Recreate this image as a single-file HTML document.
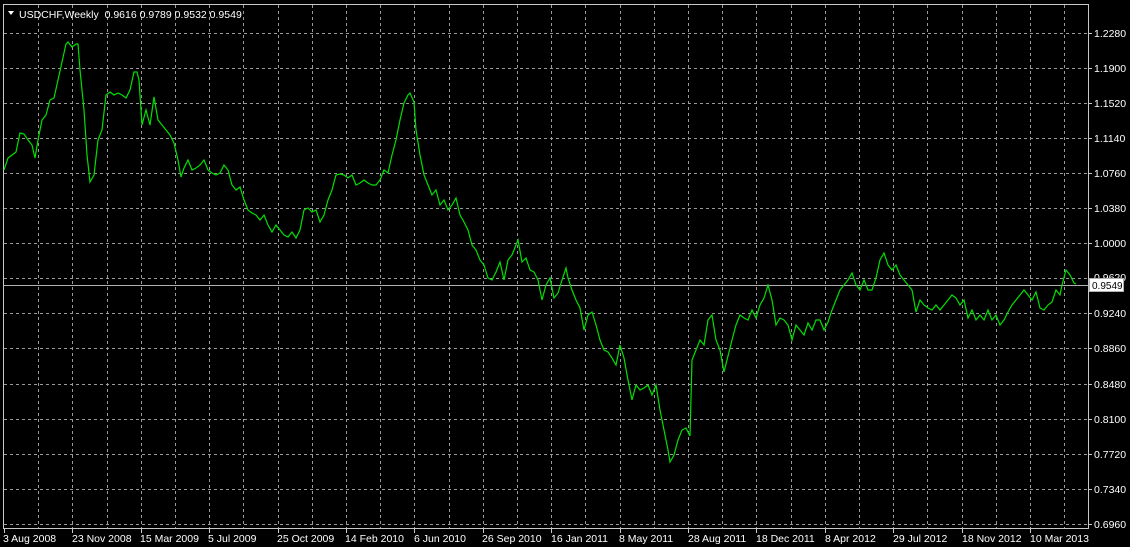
<!DOCTYPE html>
<html><head><meta charset="utf-8"><style>
html,body{margin:0;padding:0;background:#000;}
svg{display:block}
text{font-family:"Liberation Sans",sans-serif;font-size:10.5px;fill:#fff}
</style></head><body>
<svg width="1130" height="547" viewBox="0 0 1130 547" xmlns="http://www.w3.org/2000/svg">
<rect width="1130" height="547" fill="#000"/>
<g stroke="#9a9a9a" stroke-width="1" stroke-dasharray="3,3" shape-rendering="crispEdges">
<line x1="4" y1="33.5" x2="1088" y2="33.5"/>
<line x1="4" y1="68.5" x2="1088" y2="68.5"/>
<line x1="4" y1="103.5" x2="1088" y2="103.5"/>
<line x1="4" y1="138.5" x2="1088" y2="138.5"/>
<line x1="4" y1="173.5" x2="1088" y2="173.5"/>
<line x1="4" y1="208.5" x2="1088" y2="208.5"/>
<line x1="4" y1="243.5" x2="1088" y2="243.5"/>
<line x1="4" y1="278.5" x2="1088" y2="278.5"/>
<line x1="4" y1="313.5" x2="1088" y2="313.5"/>
<line x1="4" y1="348.5" x2="1088" y2="348.5"/>
<line x1="4" y1="384.5" x2="1088" y2="384.5"/>
<line x1="4" y1="419.5" x2="1088" y2="419.5"/>
<line x1="4" y1="454.5" x2="1088" y2="454.5"/>
<line x1="4" y1="489.5" x2="1088" y2="489.5"/>
<line x1="4" y1="524.5" x2="1088" y2="524.5"/>
</g>
<g id="vg" stroke="#9a9a9a" stroke-width="1" stroke-dasharray="3,3" shape-rendering="crispEdges"></g>
<line x1="4" y1="285.5" x2="1088" y2="285.5" stroke="#b0b0b0" stroke-width="1" shape-rendering="crispEdges"/>
<rect x="3.5" y="4.5" width="1085" height="524" fill="none" stroke="#c8c8c8" stroke-width="1" shape-rendering="crispEdges"/>
<polyline fill="none" stroke="#00e000" stroke-width="1.2" points="4,170 8,158 12,155 16,152 20,133 24,134 28,140 32,145 35,158 38,140 42,120 46,115 50,100 54,98 58,80 62,62 66,44 68,42 72,47 76,44 78,44 80,70 84,110 87,155 90,182 94,175 98,140 102,130 106,95 110,92 114,95 118,93 122,95 126,98 130,90 134,72 137,72 139,80 142,125 146,110 150,125 154,97 158,120 162,125 166,130 170,135 174,143 178,160 181,177 184,168 188,160 192,170 196,168 200,165 204,160 208,170 212,173 216,175 220,173 224,165 228,170 232,185 236,190 240,187 244,200 248,210 252,213 256,215 260,220 264,215 268,225 272,232 276,225 280,230 284,235 288,237 292,232 296,238 300,230 304,210 308,208 312,212 316,210 320,222 324,215 328,200 332,190 336,175 340,174 344,175 348,178 352,175 356,185 360,183 364,180 368,183 372,185 376,185 380,180 384,170 388,173 392,155 396,140 400,120 404,103 408,95 410,93 414,102 416,130 420,155 424,175 428,185 432,195 436,190 440,205 444,200 448,210 452,205 456,198 460,215 464,222 468,230 472,245 476,250 480,260 484,265 488,278 492,280 496,272 500,262 504,280 508,260 512,255 516,245 518,240 522,262 526,258 530,270 534,272 538,280 542,300 546,285 550,278 554,298 558,293 562,280 566,268 568,278 572,290 576,300 580,308 584,330 588,315 592,312 596,325 600,340 604,350 608,352 612,358 616,365 620,345 624,358 628,380 632,400 636,385 640,390 644,388 648,385 652,395 656,385 660,410 664,430 668,450 670,462 674,455 678,440 682,430 686,428 690,436 692,360 696,350 700,340 704,345 708,320 712,315 716,340 720,350 724,372 728,356 732,340 736,325 740,315 744,318 748,320 752,310 756,318 760,305 764,298 768,285 772,300 776,325 780,318 784,320 788,325 792,340 796,325 800,330 804,335 808,323 812,330 816,320 820,320 824,330 828,322 832,310 836,300 840,290 844,285 848,280 852,273 856,285 860,290 864,280 868,290 872,290 876,278 880,260 884,253 888,265 892,270 896,265 900,275 904,280 908,285 912,290 916,312 920,300 924,305 928,308 932,310 936,305 940,310 944,305 948,300 952,295 956,298 960,305 964,300 968,318 972,310 976,320 980,315 984,320 988,310 992,320 996,315 1000,325 1004,320 1008,312 1012,305 1016,300 1020,295 1024,290 1028,295 1032,300 1036,292 1040,308 1044,310 1048,305 1052,302 1056,290 1060,295 1062,285 1066,270 1070,275 1074,283 1076,284"/>
<g id="ticks" stroke="#c8c8c8" stroke-width="1" shape-rendering="crispEdges"></g>
<polygon points="8,11 14,11 11,15" fill="#fff"/>
<text x="19" y="18">USDCHF,Weekly&#160; 0.9616 0.9789 0.9532 0.9549</text>
<g>
<text x="1094" y="37">1.2280</text>
<text x="1094" y="72">1.1900</text>
<text x="1094" y="107">1.1520</text>
<text x="1094" y="142">1.1140</text>
<text x="1094" y="177">1.0760</text>
<text x="1094" y="212">1.0380</text>
<text x="1094" y="247">1.0000</text>
<text x="1094" y="317">0.9240</text>
<text x="1094" y="352">0.8860</text>
<text x="1094" y="388">0.8480</text>
<text x="1094" y="423">0.8100</text>
<text x="1094" y="458">0.7720</text>
<text x="1094" y="493">0.7340</text>
<text x="1094" y="528">0.6960</text>
<text x="1094" y="281">0.9620</text>
</g>
<rect x="1089.5" y="278.5" width="34" height="13" fill="#fff" stroke="#b0b0b0"/>
<text x="1092" y="289" style="fill:#000;font-size:10px">0.9549</text>
<g>
<text x="3" y="542">3 Aug 2008</text>
<text x="72" y="542">23 Nov 2008</text>
<text x="140" y="542">15 Mar 2009</text>
<text x="208" y="542">5 Jul 2009</text>
<text x="277" y="542">25 Oct 2009</text>
<text x="345" y="542">14 Feb 2010</text>
<text x="414" y="542">6 Jun 2010</text>
<text x="482" y="542">26 Sep 2010</text>
<text x="551" y="542">16 Jan 2011</text>
<text x="619" y="542">8 May 2011</text>
<text x="688" y="542">28 Aug 2011</text>
<text x="756" y="542">18 Dec 2011</text>
<text x="825" y="542">8 Apr 2012</text>
<text x="893" y="542">29 Jul 2012</text>
<text x="962" y="542">18 Nov 2012</text>
<text x="1030" y="542">10 Mar 2013</text>
</g>
<g stroke="#c8c8c8" stroke-width="1" shape-rendering="crispEdges">
<line x1="1088" y1="33.5" x2="1092" y2="33.5"/><line x1="1088" y1="68.5" x2="1092" y2="68.5"/><line x1="1088" y1="103.5" x2="1092" y2="103.5"/><line x1="1088" y1="138.5" x2="1092" y2="138.5"/><line x1="1088" y1="173.5" x2="1092" y2="173.5"/><line x1="1088" y1="208.5" x2="1092" y2="208.5"/><line x1="1088" y1="243.5" x2="1092" y2="243.5"/><line x1="1088" y1="313.5" x2="1092" y2="313.5"/><line x1="1088" y1="348.5" x2="1092" y2="348.5"/><line x1="1088" y1="384.5" x2="1092" y2="384.5"/><line x1="1088" y1="419.5" x2="1092" y2="419.5"/><line x1="1088" y1="454.5" x2="1092" y2="454.5"/><line x1="1088" y1="489.5" x2="1092" y2="489.5"/><line x1="1088" y1="524.5" x2="1092" y2="524.5"/>
</g>
</svg>
<script>
var ns="http://www.w3.org/2000/svg",vg=document.getElementById("vg"),tk=document.getElementById("ticks");
for(var k=1;k<=31;k++){var x=Math.round(4+34.2*k)+0.5;if(x>1087)break;var l=document.createElementNS(ns,"line");l.setAttribute("x1",x);l.setAttribute("x2",x);l.setAttribute("y1",5);l.setAttribute("y2",528);vg.appendChild(l);}
for(var k=0;k<=30;k+=2){var x=Math.round(4+34.2*k)+0.5;var t=document.createElementNS(ns,"line");t.setAttribute("x1",x);t.setAttribute("x2",x);t.setAttribute("y1",528);t.setAttribute("y2",533);tk.appendChild(t);}
</script>
</body></html>
